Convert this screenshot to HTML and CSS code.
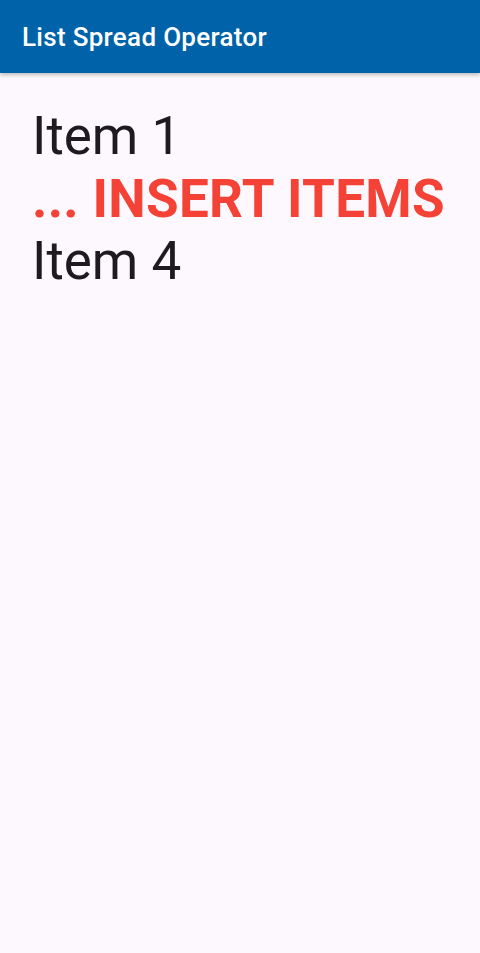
FILE: index.html
```html
<!DOCTYPE html>
<html>
<head>
<meta charset="utf-8">
<link rel="stylesheet" href="styles.css">
</head>
<body>
<header class="appbar"><span class="title">List Spread Operator</span></header>
<main class="content">
  <div class="item">Item 1</div>
  <div class="item insert">... INSERT ITEMS</div>
  <div class="item">Item 4</div>
</main>
</body>
</html>
```
FILE: styles.css
```css
html, body {
  margin: 0;
  padding: 0;
  height: 100%;
}
body {
  background: #fdf8fd;
  font-family: Roboto, "Noto Sans", sans-serif;
  overflow: hidden;
}
.appbar {
  height: 73px;
  background: #0062a8;
  display: flex;
  align-items: center;
  padding-left: 22px;
  box-shadow: 0 2px 4px rgba(0,0,0,0.25);
  position: relative;
  z-index: 1;
}
.title {
  color: #ffffff;
  font-size: 26px;
  font-weight: 500;
  letter-spacing: 0.3px;
}
.content {
  padding: 32px 32px;
}
.item {
  font-size: 53px;
  line-height: 62.5px;
  color: #1d1b20;
  white-space: nowrap;
}
.insert {
  color: #f44336;
  font-weight: 700;
  letter-spacing: 0.3px;
}
```
